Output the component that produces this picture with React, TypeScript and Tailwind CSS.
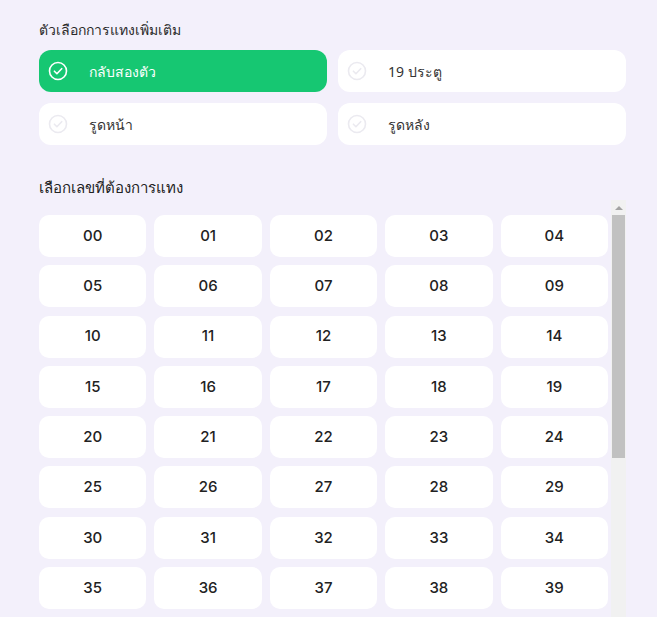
import { useState } from "react";

const options = [
  { id: "reverse", label: "กลับสองตัว" },
  { id: "19door", label: "19 ประตู" },
  { id: "front", label: "รูดหน้า" },
  { id: "back", label: "รูดหลัง" },
];

const numbers = Array.from({ length: 100 }, (_, i) => String(i).padStart(2, "0"));

function CheckCircle({ active }: { active: boolean }) {
  return (
    <svg width="20" height="20" viewBox="0 0 20 20" fill="none" className="shrink-0">
      <circle cx="10" cy="10" r="8.5" stroke={active ? "#ffffff" : "#ebeaf0"} strokeWidth="1.6" />
      <path
        d="M6.4 10.2l2.5 2.5 4.8-5"
        stroke={active ? "#ffffff" : "#ebeaf0"}
        strokeWidth="1.6"
        strokeLinecap="round"
        strokeLinejoin="round"
      />
    </svg>
  );
}

export default function App() {
  const [selected, setSelected] = useState<string[]>(["reverse"]);
  const [picked, setPicked] = useState<string[]>([]);

  const toggle = (id: string) =>
    setSelected((s) => (s.includes(id) ? s.filter((x) => x !== id) : [...s, id]));

  return (
    <div
      className="h-screen overflow-hidden bg-[#f3f0fb] pl-[39px] pt-[20px] text-[#222]"
      style={{ fontFamily: '"Noto Sans", "Inter", sans-serif' }}
    >
      <div className="w-[587px]">
        <h2 className="text-[14px] leading-[20px] text-[#2a2a2a]">ตัวเลือกการแทงเพิ่มเติม</h2>

        <div className="mt-[10px] grid grid-cols-2 gap-x-[11px] gap-y-[11px]">
          {options.map((o) => {
            const active = selected.includes(o.id);
            return (
              <button
                key={o.id}
                onClick={() => toggle(o.id)}
                className={`flex h-[42px] items-center gap-[21px] rounded-[12px] pl-[9px] text-left text-[14px] ${
                  active ? "bg-[#16c772] text-white" : "bg-white text-[#333]"
                }`}
              >
                <CheckCircle active={active} />
                <span>{o.label}</span>
              </button>
            );
          })}
        </div>

        <h2 className="mt-[31px] text-[15px] font-medium leading-[22px] text-[#222]">
          เลือกเลขที่ต้องการแทง
        </h2>

        {/* number grid + scrollbar */}
        <div className="mt-[2px] flex h-[512px]">
          <div className="w-[572px] overflow-y-auto">
            <div className="grid grid-cols-5 gap-x-2 gap-y-[8.3px] pr-[3px] pt-[15px] pb-[8px]">
              {numbers.map((n) => {
                const on = picked.includes(n);
                return (
                  <button
                    key={n}
                    onClick={() =>
                      setPicked((p) => (p.includes(n) ? p.filter((x) => x !== n) : [...p, n]))
                    }
                    className={`flex h-[42px] items-center justify-center rounded-[10px] text-[15px] font-medium ${
                      on ? "bg-[#16c772] text-white" : "bg-white text-[#222]"
                    }`}
                    style={{ fontFamily: '"Inter", "Noto Sans", sans-serif' }}
                  >
                    {n}
                  </button>
                );
              })}
            </div>
          </div>
          <div className="flex w-[15px] flex-col bg-[#f1f1f1]">
            <div className="flex h-[15px] items-center justify-center">
              <span className="h-0 w-0 border-x-[4px] border-b-[4px] border-x-transparent border-b-[#a3a3a3]" />
            </div>
            <div className="mx-[1px] h-[243px] bg-[#c1c1c1]" />
          </div>
        </div>
      </div>
    </div>
  );
}
